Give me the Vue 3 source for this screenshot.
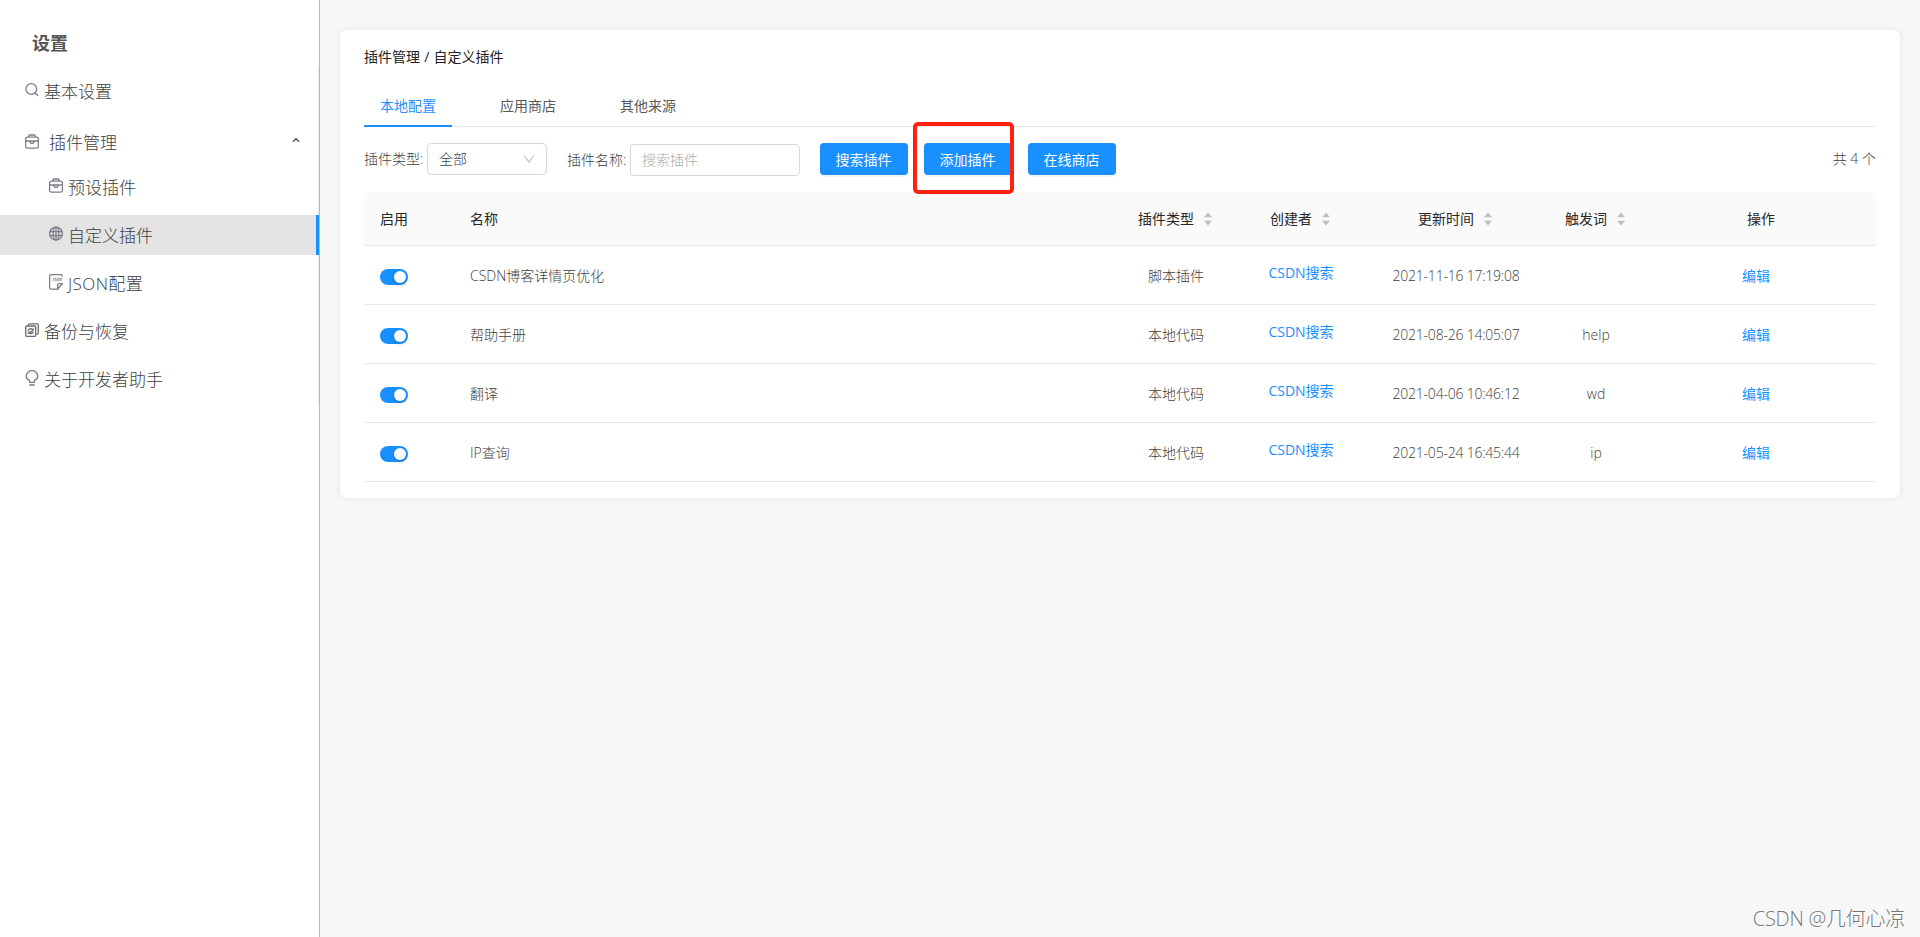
<script setup>
import { computed, ref } from "vue";

const activeMenu = ref("custom");
const activeTab = ref("local");
const submenuOpen = ref(true);
const keyword = ref("");

const tabs = [
  { id: "local", label: "本地配置" },
  { id: "store", label: "应用商店" },
  { id: "other", label: "其他来源" }
];

const subMenus = [
  { id: "preset", icon: "case", label: "预设插件" },
  { id: "custom", icon: "globe", label: "自定义插件" },
  { id: "json", icon: "json", label: "JSON配置" }
];

const columns = [
  { id: "type", label: "插件类型" },
  { id: "creator", label: "创建者" },
  { id: "time", label: "更新时间" },
  { id: "trigger", label: "触发词" }
];

const plugins = ref([
  { id: 1, enabled: true, name: "CSDN博客详情页优化", type: "脚本插件", creator: "CSDN搜索", time: "2021-11-16 17:19:08", trigger: "" },
  { id: 2, enabled: true, name: "帮助手册", type: "本地代码", creator: "CSDN搜索", time: "2021-08-26 14:05:07", trigger: "help" },
  { id: 3, enabled: true, name: "翻译", type: "本地代码", creator: "CSDN搜索", time: "2021-04-06 10:46:12", trigger: "wd" },
  { id: 4, enabled: true, name: "IP查询", type: "本地代码", creator: "CSDN搜索", time: "2021-05-24 16:45:44", trigger: "ip" }
]);

const filtered = computed(() => plugins.value.filter(p => p.name.includes(keyword.value.trim())));
</script>

<template>
  <div class="page">
    <aside class="sidebar">
      <h1 class="sidebar-title">设置</h1>
      <nav class="menu">
        <div class="menu-item" @click="activeMenu = 'basic'">
          <svg class="icon" viewBox="0 0 14 16">
            <circle cx="6.3" cy="7" r="5.4" />
            <path d="M10.2 11l2.9 2.8" />
          </svg>
          <span>基本设置</span>
        </div>
        <div class="menu-item menu-parent" @click="submenuOpen = !submenuOpen">
          <svg class="icon" viewBox="0 0 14 16">
            <rect x="0.6" y="3.2" width="12.8" height="10.9" rx="1.6" />
            <path d="M4 3V1.6q0-.6.6-.6h4.8q.6 0 .6.6V3M.8 7h12.4M5 7.2c0 3 4 3 4 0" />
          </svg>
          <span>插件管理</span>
          <svg class="arrow" viewBox="0 0 8 6"><path d="M1 4.8l3-3 3 3" /></svg>
        </div>
        <template v-if="submenuOpen">
          <div
            v-for="item in subMenus"
            :key="item.id"
            class="menu-item menu-sub"
            :class="[item.icon, { active: activeMenu === item.id }]"
            @click="activeMenu = item.id"
          >
            <svg v-if="item.icon === 'case'" class="icon" viewBox="0 0 14 16">
              <rect x="0.6" y="3.2" width="12.8" height="10.9" rx="1.6" />
              <path d="M4 3V1.6q0-.6.6-.6h4.8q.6 0 .6.6V3M.8 7h12.4M5 7.2c0 3 4 3 4 0" />
            </svg>
            <svg v-else-if="item.icon === 'globe'" class="icon" viewBox="0 0 14 16">
              <circle cx="7" cy="7.6" r="6.4" />
              <ellipse cx="7" cy="7.6" rx="3" ry="6.4" />
              <path d="M7 1.2v12.8M.8 5.6h12.4M.8 9.6h12.4" />
            </svg>
            <svg v-else class="icon" viewBox="0 0 14 16">
              <path d="M8.7 15.2H2.6q-2 0-2-2V2.6q0-2 2-2h8.8q2 0 2 2M13.4 9.6l-4.700 5.600v-3.600q0-2 2-2z" />
              <path class="thin" d="M4.600 3.800v2.400q0 1-1 .9M7.400 4.200H6.100v1.200h1.200v1.300H5.900M8.600 4.200h1.500v2.500H8.600zM11.300 6.900V4.200h1.400v2.700" />
            </svg>
            <span>{{ item.label }}</span>
          </div>
        </template>
        <div class="menu-item" @click="activeMenu = 'backup'">
          <svg class="icon dark" viewBox="0 0 14 16">
            <rect x="0.7" y="4" width="10" height="10.3" rx="1" />
            <path d="M3.4 3.8V2.7q0-.9.9-.9h8q1 0 1 1v8.3q0 1-1 1h-1.2" />
            <path d="M3 8.8c.6-2.3 3.5-2.8 5-.8l.6-1.4M8.600 9.800c-.8 2.200-3.600 2.600-5 .6l-.7 1.300M4.600 9.400l1 1 2.400-2.400" />
          </svg>
          <span>备份与恢复</span>
        </div>
        <div class="menu-item" @click="activeMenu = 'about'">
          <svg class="icon" viewBox="0 0 14 16">
            <path d="M4.6 12.4v-1.700C2.400 9.600 1.300 8 1.300 6.200a5.700 5.600 0 0 1 11.400 0c0 1.800-1.100 3.400-3.300 4.500v1.700zM4.200 15h5.600" />
          </svg>
          <span>关于开发者助手</span>
        </div>
      </nav>
    </aside>

    <main class="content">
      <section class="card">
        <div class="breadcrumb">插件管理 / 自定义插件</div>
        <div class="tabs">
          <div
            v-for="tab in tabs"
            :key="tab.id"
            class="tab"
            :class="{ active: activeTab === tab.id }"
            @click="activeTab = tab.id"
          >
            {{ tab.label }}
          </div>
        </div>

        <div class="filters">
          <span class="label">插件类型:</span>
          <div class="select">
            <span>全部</span>
            <svg class="select-arrow" viewBox="0 0 12 10"><path d="M1.200 1.200L6 8.200l4.800-7" /></svg>
          </div>
          <div class="name-field">
            <span class="label">插件名称:</span>
            <input v-model="keyword" class="input" placeholder="搜索插件" />
          </div>
          <div class="actions">
            <button type="button" class="btn">搜索插件</button>
            <span class="marked">
              <button type="button" class="btn">添加插件</button>
            </span>
            <button type="button" class="btn">在线商店</button>
          </div>
          <span class="total">共 {{ filtered.length }} 个</span>
        </div>

        <div class="table">
          <div class="row head">
            <div class="cell">启用</div>
            <div class="cell">名称</div>
            <div v-for="col in columns" :key="col.id" class="cell center sortable">
              <span>{{ col.label }}</span>
              <svg class="sorter" viewBox="0 0 8 14"><path d="M4 0.600l4 4.600H0zM4 13.400L0 8.800h8z" /></svg>
            </div>
            <div class="cell center">操作</div>
          </div>
          <div v-for="row in filtered" :key="row.id" class="row body-row">
            <div class="cell">
              <button type="button" class="switch" :class="{ on: row.enabled }" @click="row.enabled = !row.enabled"><i></i></button>
            </div>
            <div class="cell">{{ row.name }}</div>
            <div class="cell center">{{ row.type }}</div>
            <div class="cell center"><a class="creator">{{ row.creator }}</a></div>
            <div class="cell center time">{{ row.time }}</div>
            <div class="cell center">{{ row.trigger }}</div>
            <div class="cell center"><a class="edit">编辑</a></div>
          </div>
        </div>
      </section>
    </main>

    <div class="watermark">CSDN @几何心凉</div>
  </div>
</template>

<style>
body {
  margin: 0;
  overflow: hidden;
}
</style>

<style scoped>
.page {
  position: relative;
  display: flex;
  height: 100vh;
  background: #f7f7f7;
  color: #404040;
  font-family: "Open Sans", "Noto Sans CJK SC", sans-serif;
  font-size: 14px;
  font-weight: 300;
}

.page *,
.page *::after {
  box-sizing: border-box;
}

.sidebar {
  flex: none;
  width: 320px;
  border-right: 1px solid #b9b9b9;
  background: #fff;
}

.sidebar-title {
  height: 67px;
  margin: 0;
  padding: 19px 0 0 32px;
  color: #555;
  font-size: 18px;
  font-weight: 700;
  line-height: 48px;
}

.menu {
  display: flex;
  flex-direction: column;
  gap: 8px;
  padding: 4px 0;
  border-right: 1px solid #e8e8e8;
}

.menu-item {
  display: flex;
  align-items: center;
  height: 40px;
  padding-left: 25px;
  font-size: 17px;
  line-height: 40px;
  white-space: nowrap;
  cursor: pointer;
}

.menu-item span {
  padding-top: 2px;
}

.menu-item .icon {
  margin-right: 5px;
}

.menu-parent {
  height: 48px;
  margin-bottom: -8px;
  padding-right: 18px;
}

.menu-parent span {
  padding-top: 0;
}

.menu-parent .icon {
  margin-right: 10px;
}

.menu-sub {
  padding-left: 49px;
}

.menu-sub.json {
  letter-spacing: 0.4px;
}

.menu-sub.active {
  margin-right: -1px;
  border-right: 3px solid #1890ff;
  background: #e4e4e4;
}

.icon {
  flex: none;
  width: 14px;
  height: 16px;
  margin-bottom: 3px;
  fill: none;
  stroke: #7c7c8a;
  stroke-width: 1.3;
}

.icon .thin {
  stroke-width: 0.7;
}

.icon.dark {
  stroke: #6c6c6c;
}

.arrow {
  width: 8px;
  height: 6px;
  margin: 0 0 7px auto;
  fill: none;
  stroke: #555;
  stroke-width: 1.5;
}

.content {
  flex: 1;
  padding: 30px 20px;
}

.card {
  height: 468px;
  padding: 12px 24px 16px;
  border-radius: 8px;
  background: #fff;
  box-shadow: 0 0 8px rgba(0, 0, 0, 0.07);
}

.breadcrumb {
  height: 30px;
  color: #222;
  font-weight: 400;
  line-height: 30px;
  word-spacing: 0.5px;
}

.tabs {
  display: flex;
  gap: 32px;
  height: 55px;
  border-bottom: 1px solid #e8e8e8;
}

.tab {
  height: 55px;
  padding: 12px 16px 0;
  border-bottom: 2px solid transparent;
  color: #595959;
  font-weight: 400;
  line-height: 43px;
  cursor: pointer;
}

.tab.active {
  border-bottom-color: #1890ff;
  color: #1890ff;
}

.filters {
  display: flex;
  align-items: center;
  height: 32px;
  margin: 16px 0 17px;
}

.label {
  width: 63px;
  padding-bottom: 2px;
  white-space: nowrap;
}

.select {
  display: flex;
  align-items: center;
  justify-content: space-between;
  width: 120px;
  height: 32px;
  padding: 0 11px;
  border: 1px solid #d9d9d9;
  border-radius: 4px;
}

.select span {
  padding-bottom: 2px;
}

.select-arrow {
  width: 12px;
  height: 10px;
  fill: none;
  stroke: #bfbfbf;
  stroke-width: 1.1;
}

.name-field {
  display: flex;
  align-items: center;
  margin: 2px 20px 0;
}

.input {
  width: 170px;
  height: 32px;
  padding: 0 11px 2px;
  border: 1px solid #d9d9d9;
  border-radius: 4px;
  outline: none;
  color: #595959;
  font: inherit;
}

.input::placeholder {
  color: #a8a8a8;
}

.actions {
  display: flex;
  gap: 16px;
}

.btn {
  display: block;
  width: 88px;
  height: 32px;
  padding: 1px 1px 0 0;
  border: none;
  border-radius: 4px;
  background: #1890ff;
  box-shadow: 0 2px 0 rgba(0, 0, 0, 0.045);
  color: #fff;
  font: inherit;
  font-weight: 400;
  line-height: 32px;
  cursor: pointer;
}

.marked {
  position: relative;
}

.marked::after {
  content: "";
  position: absolute;
  top: -21px;
  left: -11px;
  width: 101px;
  height: 72px;
  border: 4px solid #ff2010;
  border-radius: 5px;
  pointer-events: none;
}

.total {
  margin-left: auto;
  padding-bottom: 2px;
}

.row {
  display: grid;
  grid-template-columns: 90px 1fr 120px 130px 180px 100px 230px;
  align-items: center;
  height: 59px;
  border-bottom: 1px solid #e8e8e8;
}

.body-row {
  padding-top: 2px;
}

.head {
  height: 54px;
  border-radius: 4px 4px 0 0;
  background: #fafafa;
  color: #262626;
  font-weight: 400;
}

.cell {
  padding: 0 16px;
  line-height: 22px;
  white-space: nowrap;
}

.center {
  padding: 0;
  text-align: center;
}

.time {
  letter-spacing: -0.22px;
}

.sortable {
  display: flex;
  align-items: center;
  justify-content: center;
  gap: 10px;
  padding-right: 2px;
  cursor: pointer;
}

.sorter {
  width: 8px;
  height: 14px;
  fill: #bfbfbf;
}

.switch {
  display: flex;
  align-items: center;
  width: 28px;
  height: 16px;
  margin-top: 2px;
  padding: 0 2px;
  border: none;
  border-radius: 8px;
  background: #bfbfbf;
  cursor: pointer;
}

.switch i {
  width: 12px;
  height: 12px;
  border-radius: 50%;
  background: #fff;
  box-shadow: 0 2px 4px rgba(0, 35, 11, 0.2);
}

.switch.on {
  justify-content: flex-end;
  background: #1890ff;
}

.creator,
.edit {
  color: #1890ff;
  font-weight: 400;
  cursor: pointer;
}

.creator {
  display: block;
  margin-bottom: 7px;
}

.edit {
  margin-right: 10px;
}

.watermark {
  position: absolute;
  right: 15px;
  bottom: 4px;
  color: #777;
  font-size: 20px;
  letter-spacing: -0.25px;
  line-height: 28px;
  text-shadow: 1px 1px 0 #fff;
}
</style>
